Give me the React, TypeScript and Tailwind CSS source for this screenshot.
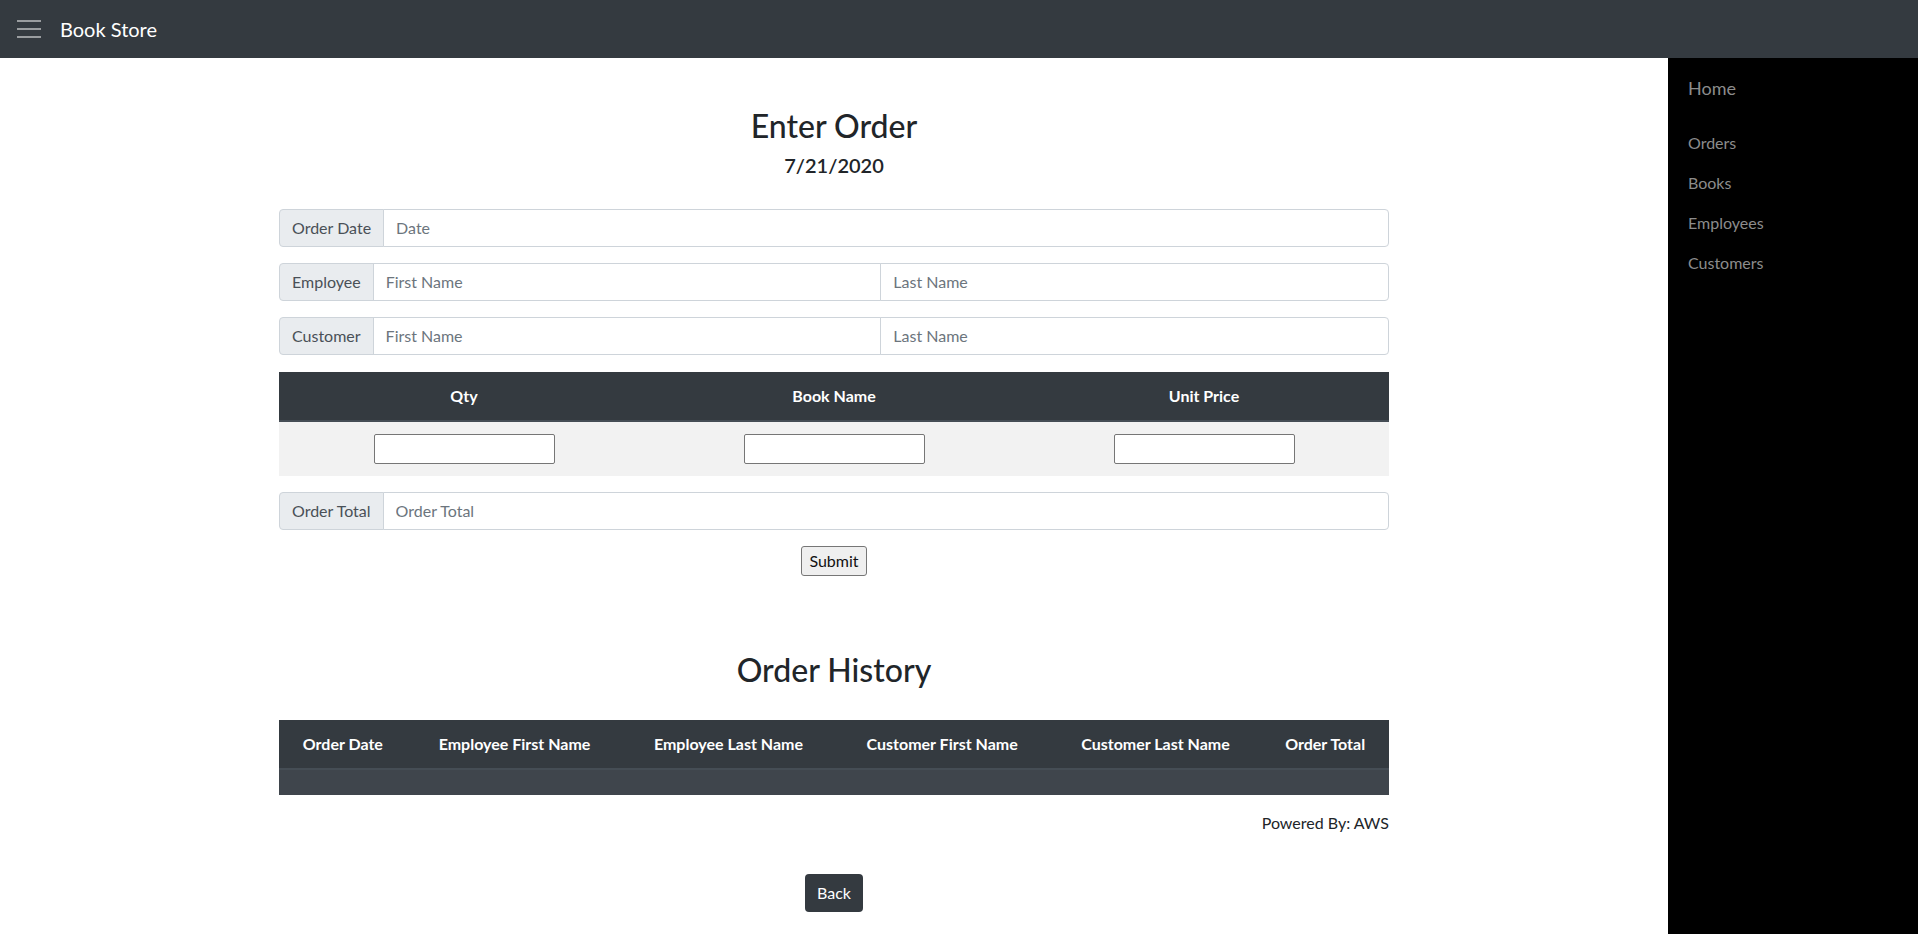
import { useState } from 'react';

const font = { fontFamily: 'Lato, "Open Sans", sans-serif' };

function Hamburger() {
  return (
    <svg width="24" height="18" viewBox="0 0 24 18" fill="none" stroke="#9a9da0" strokeWidth="2">
      <line x1="0" y1="1" x2="24" y2="1" />
      <line x1="0" y1="9" x2="24" y2="9" />
      <line x1="0" y1="17" x2="24" y2="17" />
    </svg>
  );
}

function GroupLabel({ children }: { children: string }) {
  return (
    <span className="flex items-center whitespace-nowrap rounded-l-[4px] border border-[#ced4da] bg-[#e9ecef] px-3 text-base text-[#495057]">
      {children}
    </span>
  );
}

function GroupInput({ placeholder, last }: { placeholder: string; last?: boolean }) {
  return (
    <input
      placeholder={placeholder}
      className={`-ml-px min-w-0 flex-1 border border-[#ced4da] bg-white px-3 text-base text-[#495057] outline-none placeholder:text-[#6c757d] ${
        last ? 'rounded-r-[4px]' : ''
      }`}
    />
  );
}

const historyCols = [
  'Order Date',
  'Employee First Name',
  'Employee Last Name',
  'Customer First Name',
  'Customer Last Name',
  'Order Total',
];

export default function App() {
  const [qty, setQty] = useState('');
  const [book, setBook] = useState('');
  const [price, setPrice] = useState('');

  return (
    <div className="flex min-h-screen flex-col bg-white text-[#212529]" style={font}>
      <nav className="flex h-[58px] shrink-0 items-center bg-[#343a40] px-[17px]">
        <Hamburger />
        <span className="ml-[19px] text-[20px] leading-[30px] text-white">Book Store</span>
      </nav>

      <div className="flex flex-1">
        <main className="flex-1">
          <div className="mx-auto w-full max-w-[1140px] px-[15px] pt-[49px] pb-6">
            <h2 className="text-center text-[32px] font-medium leading-[38px]">Enter Order</h2>
            <h5 className="mt-2 text-center text-[20px] font-semibold leading-6">7/21/2020</h5>

            <div className="mt-[32px] flex flex-col gap-4">
              <div className="flex h-[38px]">
                <GroupLabel>Order Date</GroupLabel>
                <GroupInput placeholder="Date" last />
              </div>
              <div className="flex h-[38px]">
                <GroupLabel>Employee</GroupLabel>
                <GroupInput placeholder="First Name" />
                <GroupInput placeholder="Last Name" last />
              </div>
              <div className="flex h-[38px]">
                <GroupLabel>Customer</GroupLabel>
                <GroupInput placeholder="First Name" />
                <GroupInput placeholder="Last Name" last />
              </div>
            </div>

            <table className="mt-[17px] w-full table-fixed border-collapse">
              <thead>
                <tr className="bg-[#343a40] text-white">
                  {['Qty', 'Book Name', 'Unit Price'].map((h) => (
                    <th key={h} className="border-b-2 border-[#454d55] py-3 text-center text-base font-bold leading-6">
                      {h}
                    </th>
                  ))}
                </tr>
              </thead>
              <tbody>
                <tr className="bg-[#f2f2f2]">
                  {[
                    [qty, setQty],
                    [book, setBook],
                    [price, setPrice],
                  ].map(([v, set], i) => (
                    <td key={i} className="py-3 text-center">
                      <input
                        value={v as string}
                        onChange={(e) => (set as (s: string) => void)(e.target.value)}
                        className="h-[30px] w-[181px] rounded-[2px] border border-[#767676] bg-white px-0.5 text-base outline-none"
                      />
                    </td>
                  ))}
                </tr>
              </tbody>
            </table>

            <div className="mt-4 flex h-[38px]">
              <GroupLabel>Order Total</GroupLabel>
              <GroupInput placeholder="Order Total" last />
            </div>

            <div className="mt-4 flex justify-center">
              <button className="h-[30px] rounded-[3px] border border-[#767676] bg-[#efefef] px-[7px] text-base font-normal leading-6 text-[#111]">
                Submit
              </button>
            </div>

            <h2 className="mt-[75px] text-center text-[32px] font-medium leading-[38px]">Order History</h2>

            <table className="mt-[31px] w-full border-collapse">
              <thead>
                <tr className="bg-[#343a40] text-white">
                  {historyCols.map((h) => (
                    <th key={h} className="border-b-2 border-[#454d55] px-3 py-3 text-center text-base font-bold leading-6 whitespace-nowrap">
                      {h}
                    </th>
                  ))}
                </tr>
              </thead>
              <tbody>
                <tr className="bg-[#3f454c]">
                  <td colSpan={6} className="h-[26px] p-0" />
                </tr>
              </tbody>
            </table>

            <p className="mt-4 text-right text-base leading-6">Powered By: AWS</p>

            <div className="mt-[39px] flex justify-center">
              <button className="h-[38px] rounded-[4px] bg-[#343a40] px-3 text-base leading-6 text-white">Back</button>
            </div>
          </div>
        </main>

        <aside className="w-[250px] shrink-0 bg-black pl-5">
          <div className="mt-[18px] text-[18px] leading-6 text-[#8c8c8c]">Home</div>
          <div className="mt-[23px] flex flex-col">
            {['Orders', 'Books', 'Employees', 'Customers'].map((l) => (
              <a key={l} href="#" className="py-2 text-base leading-6 text-[#8c8c8c]">
                {l}
              </a>
            ))}
          </div>
        </aside>
      </div>
    </div>
  );
}
